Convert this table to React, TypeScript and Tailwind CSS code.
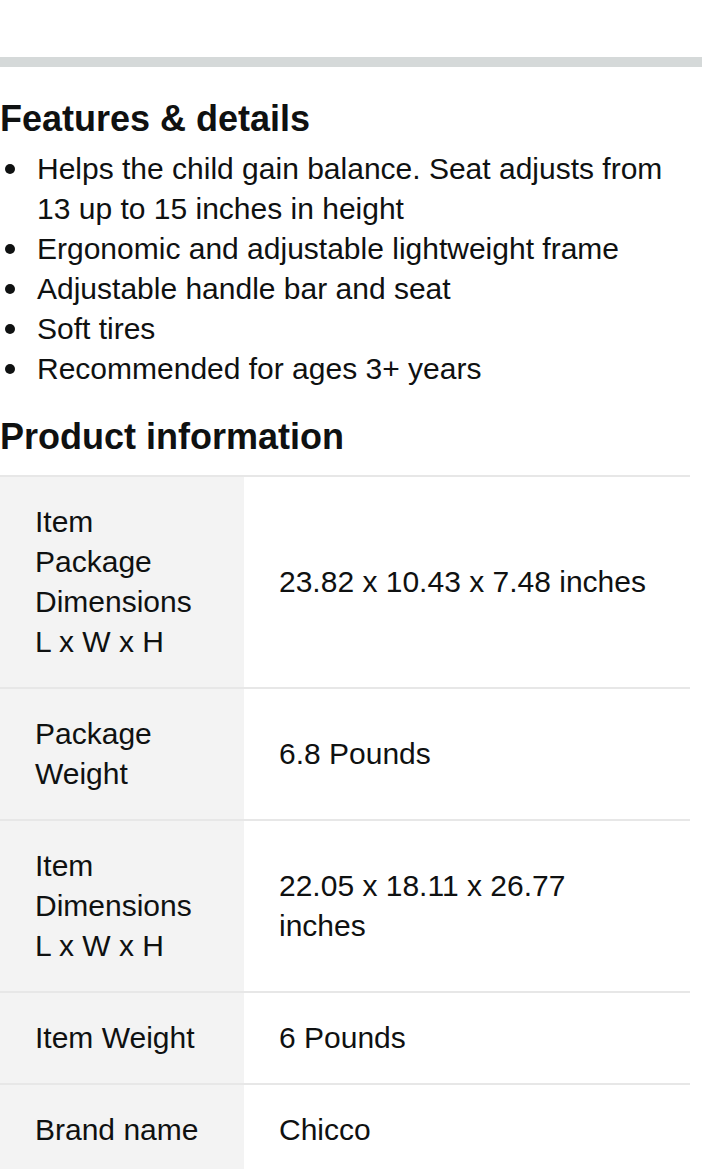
const features = [
  'Helps the child gain balance. Seat adjusts from 13 up to 15 inches in height',
  'Ergonomic and adjustable lightweight frame',
  'Adjustable handle bar and seat',
  'Soft tires',
  'Recommended for ages 3+ years',
];

const info: [string, string][] = [
  ['Item Package Dimensions L x W x H', '23.82 x 10.43 x 7.48 inches'],
  ['Package Weight', '6.8 Pounds'],
  ['Item Dimensions L x W x H', '22.05 x 18.11 x 26.77 inches'],
  ['Item Weight', '6 Pounds'],
  ['Brand name', 'Chicco'],
];

export default function App() {
  return (
    <div className="min-h-screen bg-white text-[#0f1111] font-['Liberation_Sans',Arial,sans-serif]">
      <div className="h-[57px]" />
      {/* divider bar */}
      <div className="h-[10px] bg-[#d5d9d9]" />

      <h2 className="mt-[30px] text-[36px] leading-[44px] font-bold">Features &amp; details</h2>

      <ul className="mt-[8px] pr-[30px]">
        {features.map((f) => (
          <li key={f} className="flex text-[30px] leading-[40px]">
            <span className="w-[37px] shrink-0 pt-[15px] pl-[5px]">
              <span className="block w-[10px] h-[10px] rounded-full bg-[#0f1111]" />
            </span>
            <span>{f}</span>
          </li>
        ))}
      </ul>

      <h2 className="mt-[26px] text-[36px] leading-[44px] font-bold">Product information</h2>

      {/* product info table */}
      <div className="mt-[16px] w-[690px]">
        {info.map(([label, value]) => (
          <div key={label} className="flex border-t-2 border-[#e7e7e7] text-[30px] leading-[40px]">
            <div className="w-[244px] shrink-0 bg-[#f3f3f3] py-[25px] pl-[35px] pr-[36px]">{label}</div>
            <div className="flex-1 flex items-center py-[25px] pl-[35px] pr-[36px]">{value}</div>
          </div>
        ))}
      </div>
    </div>
  );
}
